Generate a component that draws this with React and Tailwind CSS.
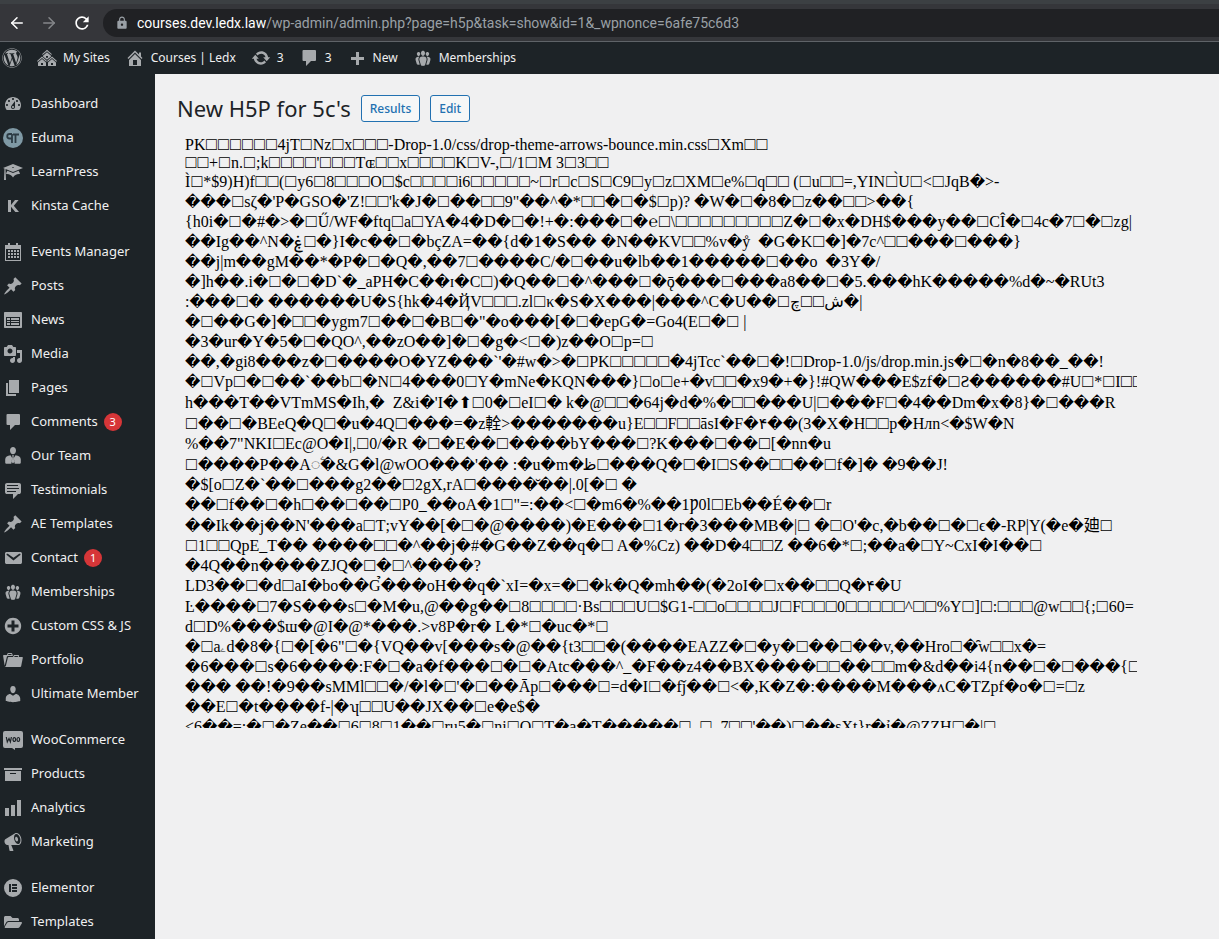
import React from 'react'
import clsx from 'clsx'
import { ArrowLeft, ArrowRight } from 'lucide-react'
import { MdLock, MdRefresh } from 'react-icons/md'
import { FaFolderOpen, FaWordpress } from 'react-icons/fa'

// 20x20 admin icons, single path each
const PATHS = {
  dashboard: 'M3.76 16h12.48c1.1-1.37 1.76-3.11 1.76-5 0-4.42-3.58-8-8-8s-8 3.58-8 8c0 1.89.66 3.63 1.76 5zM10 4c.55 0 1 .45 1 1s-.45 1-1 1-1-.45-1-1 .45-1 1-1zM6 6c.55 0 1 .45 1 1s-.45 1-1 1-1-.45-1-1 .45-1 1-1zm8 0c.55 0 1 .45 1 1s-.45 1-1 1-1-.45-1-1 .45-1 1-1zm-5.37 5.55L12 7v6c0 1.1-.9 2-2 2s-2-.9-2-2c0-.57.24-1.08.63-1.45zM4 10c.55 0 1 .45 1 1s-.45 1-1 1-1-.45-1-1 .45-1 1-1zm12 0c.55 0 1 .45 1 1s-.45 1-1 1-1-.45-1-1 .45-1 1-1zm-5 3c0-.55-.45-1-1-1s-1 .45-1 1 .45 1 1 1 1-.45 1-1z',
  learn: 'M10 10L2.54 7.02 3 18H1l.48-11.41L0 6l10-4 10 4zm0-5c-.55 0-1 .22-1 .5s.45.5 1 .5 1-.22 1-.5-.45-.5-1-.5zm0 6l5.57-2.23c.71.94 1.2 2.07 1.36 3.3-.3-.04-.61-.07-.93-.07-2.55 0-4.78 1.37-6 3.41C8.78 13.37 6.55 12 4 12c-.32 0-.63.03-.93.07.16-1.23.65-2.36 1.36-3.3z',
  calendar: 'M5 1h2v2h6V1h2v2h3v16H2V3h3zM3 7v11h14V7zM5 8h2v2H5zm3 0h2v2H8zm3 0h2v2h-2zm3 0h2v2h-2zM5 11h2v2H5zm3 0h2v2H8zm3 0h2v2h-2zm3 0h2v2h-2zM5 14h2v2H5zm3 0h2v2H8zm3 0h2v2h-2zm3 0h2v2h-2z',
  pin: 'M10.44 3.02l1.82-1.82 6.36 6.35-1.83 1.82c-1.05-.68-2.48-.57-3.41.36l-.75.75c-.92.93-1.04 2.35-.35 3.41l-1.83 1.82-2.41-2.41-2.8 2.79c-.42.42-3.38 2.71-3.8 2.29s1.86-3.39 2.28-3.81l2.79-2.79L4.1 9.36l1.83-1.82c1.05.69 2.48.57 3.4-.36l.75-.75c.93-.92 1.05-2.35.36-3.41z',
  news: 'M2 2h16c.55 0 1 .45 1 1v14c0 .55-.45 1-1 1H2c-.55 0-1-.45-1-1V3c0-.55.45-1 1-1zm15 14V7H3v9zM4 8h3v2H4zm4 0h8v2H8zm-4 3h3v1H4zm4 0h8v1H8zm-4 2h3v2H4zm4 0h8v2H8z',
  media: 'M13 11V4c0-.55-.45-1-1-1h-1.67L9 1H5L3.67 3H2c-.55 0-1 .45-1 1v7c0 .55.45 1 1 1h10c.55 0 1-.45 1-1zM7 4.5c1.38 0 2.5 1.12 2.5 2.5S8.38 9.5 7 9.5 4.5 8.38 4.5 7 5.62 4.5 7 4.5zM14 6h5v10.5c0 1.38-1.12 2.5-2.5 2.5S14 17.88 14 16.5s1.12-2.5 2.5-2.5c.17 0 .34.02.5.05V9h-3V6zm-4 8.05V13h2v3.5c0 1.38-1.12 2.5-2.5 2.5S7 17.88 7 16.5 8.12 14 9.5 14c.17 0 .34.02.5.05z',
  page: 'M6 15V2h10v13H6zm-1 1h8v2H3V5h2v11z',
  comment: 'M4.500 2h11.500a1 1 0 0 1 1 1v9a1 1 0 0 1-1 1h-4l-5 5v-5H4.500a1 1 0 0 1-1-1V3a1 1 0 0 1 1-1z',
  team: 'M10 1c1.700 0 3 1.400 3 3.400S11.700 8.300 10 8.300 7 6.400 7 4.400 8.300 1 10 1zM7.500 9.300L9.200 12l-.9 5.800H3.600c-.8 0-1.400-.6-1.400-1.400v-2.900c0-2.300 2.200-4 5.300-4.200zm5 0c3.100.2 5.300 1.900 5.300 4.200v2.900c0 .8-.6 1.400-1.400 1.400h-4.700l-.9-5.800zM9 9.200h2l-.5 1.600.8 5.200L10 17.500 8.700 16l.8-5.200z',
  testimonial: 'M4 3h12c.55 0 1.02.2 1.41.59S18 4.45 18 5v7c0 .55-.2 1.02-.59 1.41S16.55 14 16 14h-1l-5 5v-5H4c-.55 0-1.02-.2-1.41-.59S2 12.55 2 12V5c0-.55.2-1.02.59-1.41S3.45 3 4 3zm11 2H4v1h11V5zm1 3H4v1h12V8zm-3 3H4v1h9v-1z',
  email: 'M3.87 4h13.25C18.37 4 19 4.59 19 5.79v8.42c0 1.19-.63 1.79-1.88 1.79H3.87c-1.25 0-1.88-.6-1.88-1.79V5.79c0-1.2.63-1.79 1.88-1.79zm6.62 8.6l6.74-5.53c.24-.2.43-.66.13-1.07-.29-.41-.82-.42-1.17-.17l-5.7 3.86L4.8 5.83c-.35-.25-.88-.24-1.17.17-.3.41-.11.87.13 1.07z',
  groups: 'M8.03 4.46c-.29 1.28.55 3.46 1.97 3.46 1.41 0 2.25-2.18 1.96-3.46-.22-.98-1.08-1.63-1.96-1.63-.89 0-1.74.65-1.97 1.63zm-4.13.9c-.25 1.08.47 2.93 1.67 2.93s1.92-1.85 1.67-2.93c-.19-.83-.92-1.39-1.67-1.39s-1.48.56-1.67 1.39zm8.86 0c-.25 1.08.47 2.93 1.66 2.93 1.2 0 1.92-1.85 1.67-2.93-.19-.83-.92-1.39-1.67-1.39-.74 0-1.47.56-1.66 1.39zm-.59 11.43l1.25-4.3C14.2 10 12.71 8.47 10 8.47c-2.72 0-4.21 1.53-3.44 4.02l1.26 4.3C8.05 17.51 9 18 10 18c.98 0 1.94-.49 2.17-1.21zm-6.1-7.63c-.49.67-.96 1.83-.42 3.59l1.12 3.79c-.34.2-.77.31-1.2.31-.85 0-1.65-.41-1.85-1.03l-1.07-3.65c-.65-2.11.61-3.4 2.92-3.4.27 0 .54.02.79.06-.1.1-.2.22-.29.33zm8.35-.39c2.31 0 3.58 1.29 2.92 3.4l-1.07 3.65c-.2.62-1 1.03-1.85 1.03-.43 0-.86-.11-1.2-.31l1.11-3.77c.55-1.78.08-2.94-.42-3.61-.08-.11-.18-.23-.28-.33.25-.04.51-.06.79-.06z',
  plusAlt: 'M15.8 4.2c3.2 3.21 3.2 8.39 0 11.6-3.21 3.2-8.39 3.2-11.6 0C1 12.59 1 7.41 4.2 4.2 7.41 1 12.59 1 15.8 4.2zm-4.3 11.3v-4h4v-3h-4v-4h-3v4h-4v3h4v4h3z',
  portfolio: 'M4 5H.78c-.37 0-.74.32-.69.84l1.56 9.99S3.5 8.47 3.86 6.7c.11-.53.61-.7.98-.7H10s-.7-2.08-.77-2.31C9.11 3.25 8.89 3 8.45 3H5.14c-.36 0-.7.23-.8.64C4.25 4.04 4 5 4 5zm4.88 0h-4s.42-1 .87-1h2.13c.48 0 1 1 1 1zM2.67 16.25c-.31.47-.76.75-1.26.75h15.73c.54 0 .92-.31 1.03-.83.44-2.19 1.68-8.44 1.68-8.44.07-.5-.3-.73-.62-.73H16V5.53c0-.16-.26-.53-.66-.53h-3.76c-.52 0-.87.58-.87.58L10 7H5.59c-.32 0-.63.19-.69.5 0 0-1.59 6.7-1.72 7.33-.07.37-.22.99-.51 1.42zM15.38 7H11s.58-1 1.13-1h2.29c.71 0 .96 1 .96 1z',
  user: 'M10 9.25c-2.27 0-2.73-3.44-2.73-3.44C7 4.02 7.82 2 9.97 2c2.16 0 2.98 2.02 2.71 3.81 0 0-.41 3.44-2.68 3.44zm0 2.57L12.72 10c2.39 0 4.52 2.33 4.52 4.53v2.49s-3.65 1.13-7.24 1.13c-3.65 0-7.24-1.13-7.24-1.13v-2.49c0-2.25 1.94-4.48 4.47-4.48z',
  archive: 'M19 4v2H1V4h18zM2 7h16v10H2V7zm11 3V9H7v1h6z',
  chart: 'M18 18V2h-4v16h4zm-6 0V7H8v11h4zm-6 0v-8H2v8h4z',
  megaphone: 'M18.15 5.94c.46 1.62.38 3.22-.02 4.48-.42 1.28-1.26 2.18-2.3 2.48-.16.06-.26.06-.4.06-.06.02-.12.02-.18.02-.06.02-.14.02-.22.02h-6.8l2.22 5.5c.02.14-.06.26-.14.34-.08.1-.24.16-.34.16H6.95c-.1 0-.26-.06-.34-.16-.08-.08-.16-.2-.14-.34l-1-5.5H4.25l-.02-.02c-.5.06-1.08-.18-1.54-.62s-.88-1.08-1.06-1.88c-.24-.8-.2-1.56-.02-2.2.18-.62.58-1.08 1.06-1.3l.02-.02 9-5.4c.1-.06.18-.1.24-.16.06-.04.14-.08.24-.12.16-.08.28-.12.5-.18 1.04-.3 2.24.1 3.22.98s1.84 2.24 2.26 3.86zm-2.58 5.98h-.02c.4-.1.74-.34 1.04-.7.58-.7.86-1.76.86-3.04 0-.64-.1-1.3-.28-1.98-.34-1.36-1.02-2.5-1.78-3.24s-1.68-1.1-2.46-.88c-.82.22-1.4.96-1.7 2-.32 1.04-.28 2.36.06 3.72.38 1.36 1 2.5 1.8 3.24.78.74 1.62 1.1 2.48.88zm-2.54-7.08c.22-.04.42-.02.62.04.38.16.76.48 1.02 1s.42 1.2.42 1.78c0 .3-.04.56-.12.8-.18.48-.44.84-.86.94-.34.1-.8-.06-1.14-.4s-.64-.86-.78-1.5c-.18-.62-.12-1.24.02-1.72s.48-.84.82-.94z',
  elementor: 'M10 1a9 9 0 1 1 0 18 9 9 0 0 1 0-18zM6 6v8h2V6zm3 0v2h5V6zm0 3v2h5V9zm0 3v2h5v-2z',
  update: 'M10.2 3.28c3.53 0 6.43 2.61 6.92 6h2.08l-3.5 4-3.5-4h2.32c-.45-1.97-2.21-3.45-4.32-3.45-1.45 0-2.73.71-3.54 1.78L4.95 5.66C6.23 4.2 8.11 3.28 10.2 3.28zm-.4 13.44c-3.52 0-6.43-2.61-6.92-6H.8l3.5-4c1.17 1.33 2.33 2.67 3.5 4H5.48c.45 1.97 2.21 3.45 4.32 3.45 1.45 0 2.73-.71 3.54-1.78l1.71 1.95c-1.28 1.46-3.15 2.38-5.25 2.38z',
  home: 'M16 8.5l1.53 1.53-1.06 1.06L10 4.6l-6.47 6.49-1.06-1.06L10 2.5l4 4v-2h2v4zm-6-2.46l6 5.99V18H4v-5.97zM12 17v-5H8v5h4z',
  sites: 'M14.27 6.87L10 3.14 5.73 6.87 5 6.14l5-4.38 5 4.38zM14 8.42l-4.05 3.43L6 8.38v-.74l4-3.5 4 3.5v.78zM11 9.7V8H9v1.7h2zm-1.73 4.03L5 10 .73 13.73 0 13l5-4.38L10 13zm10 0L15 10l-4.27 3.73L10 13l5-4.38L20 13zM5 11l4 3.5V18H1v-3.5zm10 0l4 3.5V18h-8v-3.5zm-9 6v-2H4v2h2zm10 0v-2h-2v2h2z',
  plus: 'M17 9v3h-5v5H9v-5H4V9h5V4h3v5h5z',
}

const MENU = [
  [
    { label: 'Dashboard', icon: 'dashboard' },
    { label: 'Eduma', icon: 'eduma' },
    { label: 'LearnPress', icon: 'learn' },
    { label: 'Kinsta Cache', icon: 'kinsta' },
  ],
  [
    { label: 'Events Manager', icon: 'calendar' },
    { label: 'Posts', icon: 'pin' },
    { label: 'News', icon: 'news' },
    { label: 'Media', icon: 'media' },
    { label: 'Pages', icon: 'page' },
    { label: 'Comments', icon: 'comment', count: 3 },
    { label: 'Our Team', icon: 'team' },
    { label: 'Testimonials', icon: 'testimonial' },
    { label: 'AE Templates', icon: 'pin' },
    { label: 'Contact', icon: 'email', count: 1 },
    { label: 'Memberships', icon: 'groups' },
    { label: 'Custom CSS & JS', icon: 'plusAlt' },
    { label: 'Portfolio', icon: 'portfolio' },
    { label: 'Ultimate Member', icon: 'user' },
  ],
  [
    { label: 'WooCommerce', icon: 'woo' },
    { label: 'Products', icon: 'archive' },
    { label: 'Analytics', icon: 'chart' },
    { label: 'Marketing', icon: 'megaphone' },
  ],
  [
    { label: 'Elementor', icon: 'elementor' },
    { label: 'Templates', icon: 'folder' },
  ],
]

const BAR_ITEMS = [
  { label: 'My Sites', icon: 'sites' },
  { label: 'Courses | Ledx', icon: 'home' },
  { label: '3', icon: 'update' },
  { label: '3', icon: 'comment' },
  { label: 'New', icon: 'plus' },
  { label: 'Memberships', icon: 'groups' },
]

// Raw package bytes read as text. □ stands for a byte with no glyph.
const DUMP = [
  'PK□□□□□□4jT□Nz□x□□□-Drop-1.0/css/drop-theme-arrows-bounce.min.css□Xm□□',
  '□□+□n.□;k□□□□\'□□□Tɶ□□x□□□□K□V-,□/1□M 3□3□□',
  'Ì□*$9)H)f□□(□y6□8□□□O□$c□□□□i6□□□□□~□r□c□S□C9□y□z□XM□e%□q□□ (□u□□=,YIN□̀U□<□JqB�>-',
  '���□sζ�\'P�GSO�\'Z!□□\'k�J�□��□□9"��^�*□□�□�$□p)? �W�□�8�□z��□□>��{',
  '{h0i�□�#�>�□Ű/WF�ftq□a□YA�4�D�□�!+�:���□�℮□\\□□□□□□□□□Z�□�x�DH$���y��□CÎ�□4c�7□�□zg|',
  '��Ig��^N�ۼ□�}I�c��□�bçZA=��{d�1�S�� �N��KV□□%v�ẙ  �G�K□�]�7c^□□���□���}',
  '��j|m��gM��*�P�□�Q�,��7□����C/�□��u�lb��1�����□��o  �3Y�/',
  '�]h��.i�□�□�D`�_aPH�C��ɪ�C□)�Q��□�^���□�ǭ���□���a8��□�5.���hK�����%d�~�RUt3',
  ':���□� ������U�S{hk�4�ҊV□□□.zl□κ�S�X���|���^C�U��□چ□□ﺵ�|',
  '�□��G�]�□□�ygm7□��□�B□�"�o���[�□�epG�=Go4(E□�□ |',
  '�3�ur�Y�5�□�QO^,��zO��]�□�g�<□�)z��O□p=□',
  '��,�gi8���z�□����O�YZ���`\'�#w�>�□PK□□□□□�4jTcc`��□�!□Drop-1.0/js/drop.min.js�□�n�8��_��!',
  '�□Vp□�□��`��b□�N□4���0□Y�mNe�KQN���}□o□e+�v□□�x9�+�}!#QW���E$zf�□Ƨ������#U□*□I□□',
  'h���T��VTmMS�Ih,�  Z&i�\'I�⬆□0�□eI□� k�@□□�64j�d�%�□□���U|□���F□�4��Dm�x�8}�□���R',
  '□��□�BEeQ�Q□�u�4Q□���=�z輇>�������u}E□□F□□āsI�F�۴��(3�X�H□□p�Hлn<�$W�N',
  '%��7"NKI□Ec@O�I|,□0/�R �□�E��□����bY���□?K���□��□[�nn�u',
  '□����P��A◌ۧ�&G�l@wOO���\'�� :�u�m�ﻇ□���Q�□�I□S��□□��□f�]� �9��J!',
  '�$[o□Z�`��□���g2��□2gX,rA□����̆��|.0[�□ �',
  '��□f��□�h□��□��□P0_��oA�1□"=:��<□�m6�%��1Ƿ0l□Eb��É��□r',
  '��Ik��j��N\'���a□Ƭ;vY��[�□�@����)�E���□1�r�3���MB�|□ �□O\'�c,�b��□�□ϵ�-RP|Y(�e�廸□',
  '□1□□QpE_T�� ����□□�^��j�#�G��Z��q�□ A�%Cz) ��D�4□□Z ��6�*□;��a�□Y~CxI�I��□',
  '�4Q��n����ZJQ�□�□^����?',
  'LD3��□�d□aI�bo��G̉���oH��q�`xI=�x=�□�k�Q�mh��(�2oI�□x��□□Q�۴�U',
  'Ŀ����□7�S���s□�M�u,@��g��□8□□□□·Bs□□□U□$G1-□□o□□□□J□F□□□0□□□□□^□□%Y□]□:□□□@w□□{;□60=',
  'd□D%���$ɯ�@I�@*���.>v8P�r� L�*□�uc�*□',
  '�□aۦd�8�{□�[�6"□�{VQ��v[���s�@��{t3□□�(����EAZZ�□�y�□��□��v,��Hro□�̑w□□x�=',
  '�6���□s�6����:F�□�a�f���□�□�Atc���^_�F��z4��BX����□□��□□m�&d��i4{n��□�□���{□',
  '��� ��!�9��sMMl□□�/�l�□\'�□��Āp□���□=d�I□�fǰ��□<�,K�Z�:����M���ʌC�TZpf�o�□=□z',
  '��E□�t����f-|�ʮ□□U��JX��□e�e$�',
  '<6��=:�□�Ze��□6□8□1��□ru5�□ni□O□T�a�T�����□_□_7□□\'��)□��sXt}r�ỉ�@ZZH□�|□',
]

// Lines whose fallback glyphs make them a little taller
const TALL = new Set([2, 13, 14, 16, 19, 23])

function Icon({ name }) {
  const cls = 'w-5 h-5 shrink-0 text-[#a7aaad]'
  if (name === 'folder') return <FaFolderOpen className={clsx(cls, 'p-px')} />
  if (name === 'eduma') {
    return (
      <svg viewBox="0 0 20 20" className={cls}>
        <circle cx="10" cy="10" r="10" fill="#7f99a5" />
        <path d="M9 6H6.500a2 2 0 0 0 0 4.500H9M9 6v9M10 6.500h6M12.500 6.500V15" fill="none" stroke="#2c3b44" strokeWidth="1.800" />
      </svg>
    )
  }
  if (name === 'kinsta') {
    return (
      <svg viewBox="0 0 20 20" className={cls} fill="currentColor">
        <path d="M5 4h3v5l4-5h3.600l-4.800 5.800L16 16h-3.700L8 10.800V16H5z" />
      </svg>
    )
  }
  if (name === 'woo') {
    return (
      <svg viewBox="0 0 20 20" className={cls} fill="currentColor">
        <path d="M2 1h16a2 2 0 0 1 2 2v13a2 2 0 0 1-2 2h-6v2l-3-2H2a2 2 0 0 1-2-2V3a2 2 0 0 1 2-2z" />
        <path
          d="M3.300 7l1 5L6 8.500 7.400 12l1-5M10 9.500a1.300 2 0 1 0 2.600 0 1.300 2 0 1 0-2.600 0M14 9.500a1.300 2 0 1 0 2.600 0 1.300 2 0 1 0-2.600 0"
          fill="none"
          stroke="#1d2327"
          strokeWidth="1.200"
        />
      </svg>
    )
  }
  return (
    <svg viewBox="0 0 20 20" className={cls} fill="currentColor" fillRule="evenodd">
      <path d={PATHS[name]} />
    </svg>
  )
}

function BrowserBar() {
  return (
    <header className="border-t-4 border-[#3c4043] bg-[#35363a] border-b border-b-[#5f6368]">
      <div className="flex items-center h-[37px] pl-2">
        <div className="flex items-center gap-3.5 w-[95px]">
          <button aria-label="Back" className="text-white"><ArrowLeft size={18} /></button>
          <button aria-label="Forward" className="text-[#85878a]"><ArrowRight size={18} /></button>
          <button aria-label="Reload" className="text-white"><MdRefresh size={20} /></button>
        </div>
        <div className="flex-1 flex items-center gap-2 h-7 pl-3 rounded-l-full bg-[#202124]">
          <MdLock className="w-3.5 h-3.5 text-[#9aa0a6]" />
          <p className="text-sm text-[#9aa0a6] whitespace-nowrap font-['Roboto',sans-serif]">
            <span className="text-white">courses.dev.ledx.law</span>
            /wp-admin/admin.php?page=h5p&amp;task=show&amp;id=1&amp;_wpnonce=6afe75c6d3
          </p>
        </div>
      </div>
    </header>
  )
}

function AdminBar() {
  return (
    <nav className="flex items-center gap-[15px] h-8 pl-0.5 bg-[#1d2327] text-xs text-[#f0f0f1]">
      <a href="#wordpress" aria-label="About WordPress">
        <FaWordpress className="w-5 h-5 text-[#a7aaad]" />
      </a>
      {BAR_ITEMS.map(item => (
        <a key={item.icon} href={`#${item.icon}`} className="flex items-center gap-1.5 whitespace-nowrap">
          <Icon name={item.icon} />
          {item.label}
        </a>
      ))}
    </nav>
  )
}

function Sidebar() {
  return (
    <aside className="w-[155px] shrink-0 pt-[13px] bg-[#1d2327] text-[13px] text-[#f0f0f1]">
      {MENU.map(group => (
        <ul key={group[0].label} className="mb-3 last:mb-0">
          {group.map(item => (
            <li key={item.label}>
              <a href={`#${item.icon}`} className="flex items-center gap-2 h-[34px] pl-[3px] whitespace-nowrap">
                <Icon name={item.icon} />
                <span>{item.label}</span>
                {item.count && (
                  <span className="flex items-center justify-center w-[18px] h-[18px] -ml-0.5 rounded-full bg-[#d63638] text-[11px] text-white">
                    {item.count}
                  </span>
                )}
              </a>
            </li>
          ))}
        </ul>
      ))}
    </aside>
  )
}

function ActionButton({ children }) {
  return (
    <button className="h-[27px] px-2 rounded-[3px] border border-[#2271b1] bg-[#f6f7f7] text-xs font-medium text-[#2271b1]">
      {children}
    </button>
  )
}

// Boxes and replacement marks get their own size, the rest is plain text.
// A box in a run sits tighter than one that stands alone.
function DumpLine({ text }) {
  return text.split(/(□+|�+)/).map((part, i) => {
    if (part[0] === '□') {
      const width = part.length > 1 ? 'w-3' : 'w-[13px]'
      return Array.from(part, (box, j) => (
        <span key={`${i}-${j}`} className={clsx('inline-block text-center text-lg leading-none', width)}>{box}</span>
      ))
    }
    if (part[0] === '�') return <span key={i} className="text-[15px]">{part}</span>
    return part
  })
}

export default function App() {
  return (
    <div className="min-h-screen flex flex-col bg-[#f0f0f1] font-['Noto_Sans',sans-serif]">
      <BrowserBar />
      <AdminBar />
      <div className="flex-1 flex">
        <Sidebar />
        <main className="flex-1 min-w-0 pt-[21px] pl-[22px] pr-[82px]">
          <div className="flex items-center gap-2.5 h-[27px]">
            <h1 className="text-[22px] text-[#1d2327] whitespace-nowrap">New H5P for 5c's</h1>
            <ActionButton>Results</ActionButton>
            <ActionButton>Edit</ActionButton>
          </div>
          <div className="h-[593px] mt-[13px] ml-2 overflow-hidden text-base text-black font-['Liberation_Serif','DejaVu_Sans','Noto_Sans_CJK_SC',serif]">
            {DUMP.map((line, i) => (
              <p
                key={i}
                className={clsx(
                  'whitespace-pre [unicode-bidi:bidi-override]',
                  i < 2 ? 'h-[18px] leading-[18px]' : TALL.has(i) ? 'h-[21px] leading-[21px]' : 'h-5 leading-5',
                )}
              >
                <DumpLine text={line} />
              </p>
            ))}
          </div>
        </main>
      </div>
    </div>
  )
}
